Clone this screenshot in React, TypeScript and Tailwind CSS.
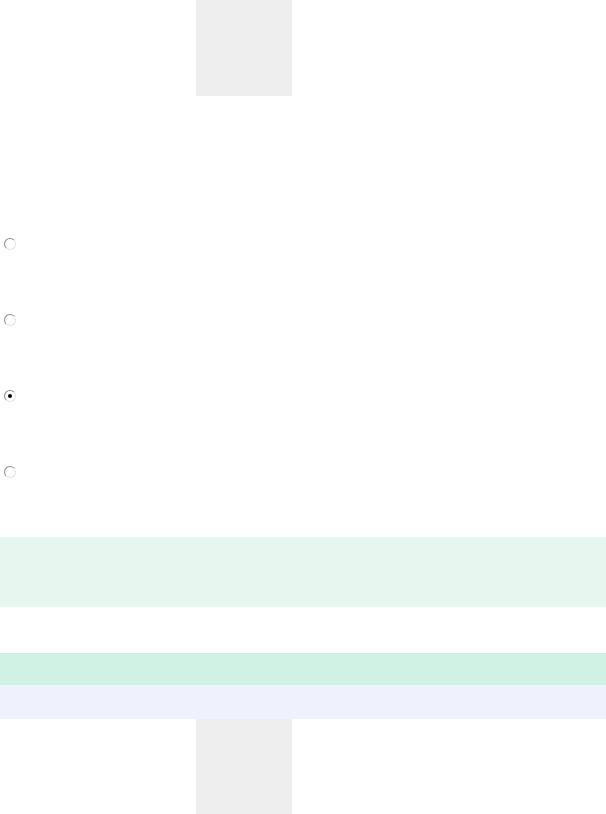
function Radio({ checked }: { checked: boolean }) {
  return (
    <span className="flex h-[12px] w-[12px] items-center justify-center rounded-full border border-b-[#e4e4e4] border-l-[#8a8a8a] border-r-[#e4e4e4] border-t-[#8a8a8a] bg-white">
      {checked && <span className="h-[4px] w-[4px] rounded-full bg-black" />}
    </span>
  );
}

export default function App() {
  const options = [false, false, true, false];

  return (
    <div className="w-[606px] bg-white" style={{ fontFamily: "'Liberation Sans', sans-serif" }}>
      <div className="ml-[196px] h-24 w-24 bg-[#eeeeee]" />
      <div className="h-[137px]" />
      {options.map((checked, index) => (
        <div key={index} className="h-[76px] pl-[4px] pt-[5px]">
          <Radio checked={checked} />
        </div>
      ))}
      <div className="h-[70px] bg-[#e6f7ef]" />
      <div className="h-[46px]" />
      <div className="h-[32px] bg-[#cff2e4]" />
      <div className="h-[34px] bg-[#eef2fd]" />
      <div className="ml-[196px] h-24 w-24 bg-[#eeeeee]" />
    </div>
  );
}
